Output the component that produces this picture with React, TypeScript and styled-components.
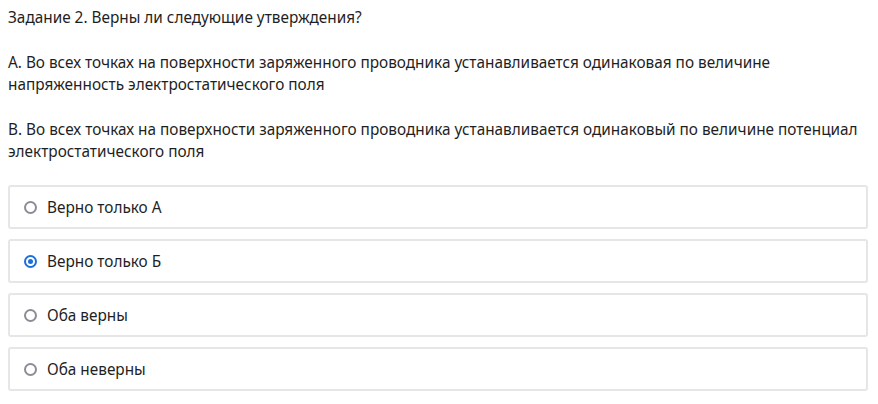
import React, { useState } from "react";
import styled, { createGlobalStyle } from "styled-components";

const GlobalStyle = createGlobalStyle`
  html, body {
    margin: 0;
    padding: 0;
    background: #ffffff;
  }
  body {
    font-family: "Noto Sans", "Open Sans", Arial, sans-serif;
    color: #1f1f1f;
  }
`;

const Page = styled.div`
  padding: 6px 10px 0 8px;
  font-size: 15.35px;
  line-height: 22px;
`;

const Title = styled.div`
  margin: 0 0 23px;
`;

const Statement = styled.p`
  margin: 0 0 23px;
`;

const Options = styled.div`
  display: flex;
  flex-direction: column;
  gap: 10px;
`;

const Option = styled.label`
  display: flex;
  align-items: center;
  gap: 10px;
  height: 44px;
  box-sizing: border-box;
  padding: 0 14px;
  border: 2px solid #e6e6e6;
  border-radius: 3px;
  cursor: pointer;
`;

const Radio = styled.span<{ $checked: boolean }>`
  width: 13px;
  height: 13px;
  box-sizing: border-box;
  border-radius: 50%;
  border: 2px solid ${(p) => (p.$checked ? "#1a6fdc" : "#8d8c96")};
  display: flex;
  align-items: center;
  justify-content: center;
  flex-shrink: 0;

  &::after {
    content: "";
    width: 5px;
    height: 5px;
    border-radius: 50%;
    background: ${(p) => (p.$checked ? "#1a6fdc" : "transparent")};
  }
`;

const answers = ["Верно только А", "Верно только Б", "Оба верны", "Оба неверны"];

export default function App() {
  const [selected, setSelected] = useState(1);

  return (
    <Page>
      <GlobalStyle />
      <Title>Задание 2. Верны ли следующие утверждения?</Title>
      <Statement>
        А. Во всех точках на поверхности заряженного проводника устанавливается одинаковая по величине
        напряженность электростатического поля
      </Statement>
      <Statement>
        В. Во всех точках на поверхности заряженного проводника устанавливается одинаковый по величине потенциал
        электростатического поля
      </Statement>
      <Options>
        {answers.map((a, i) => (
          <Option key={a} onClick={() => setSelected(i)}>
            <Radio $checked={selected === i} />
            {a}
          </Option>
        ))}
      </Options>
    </Page>
  );
}
